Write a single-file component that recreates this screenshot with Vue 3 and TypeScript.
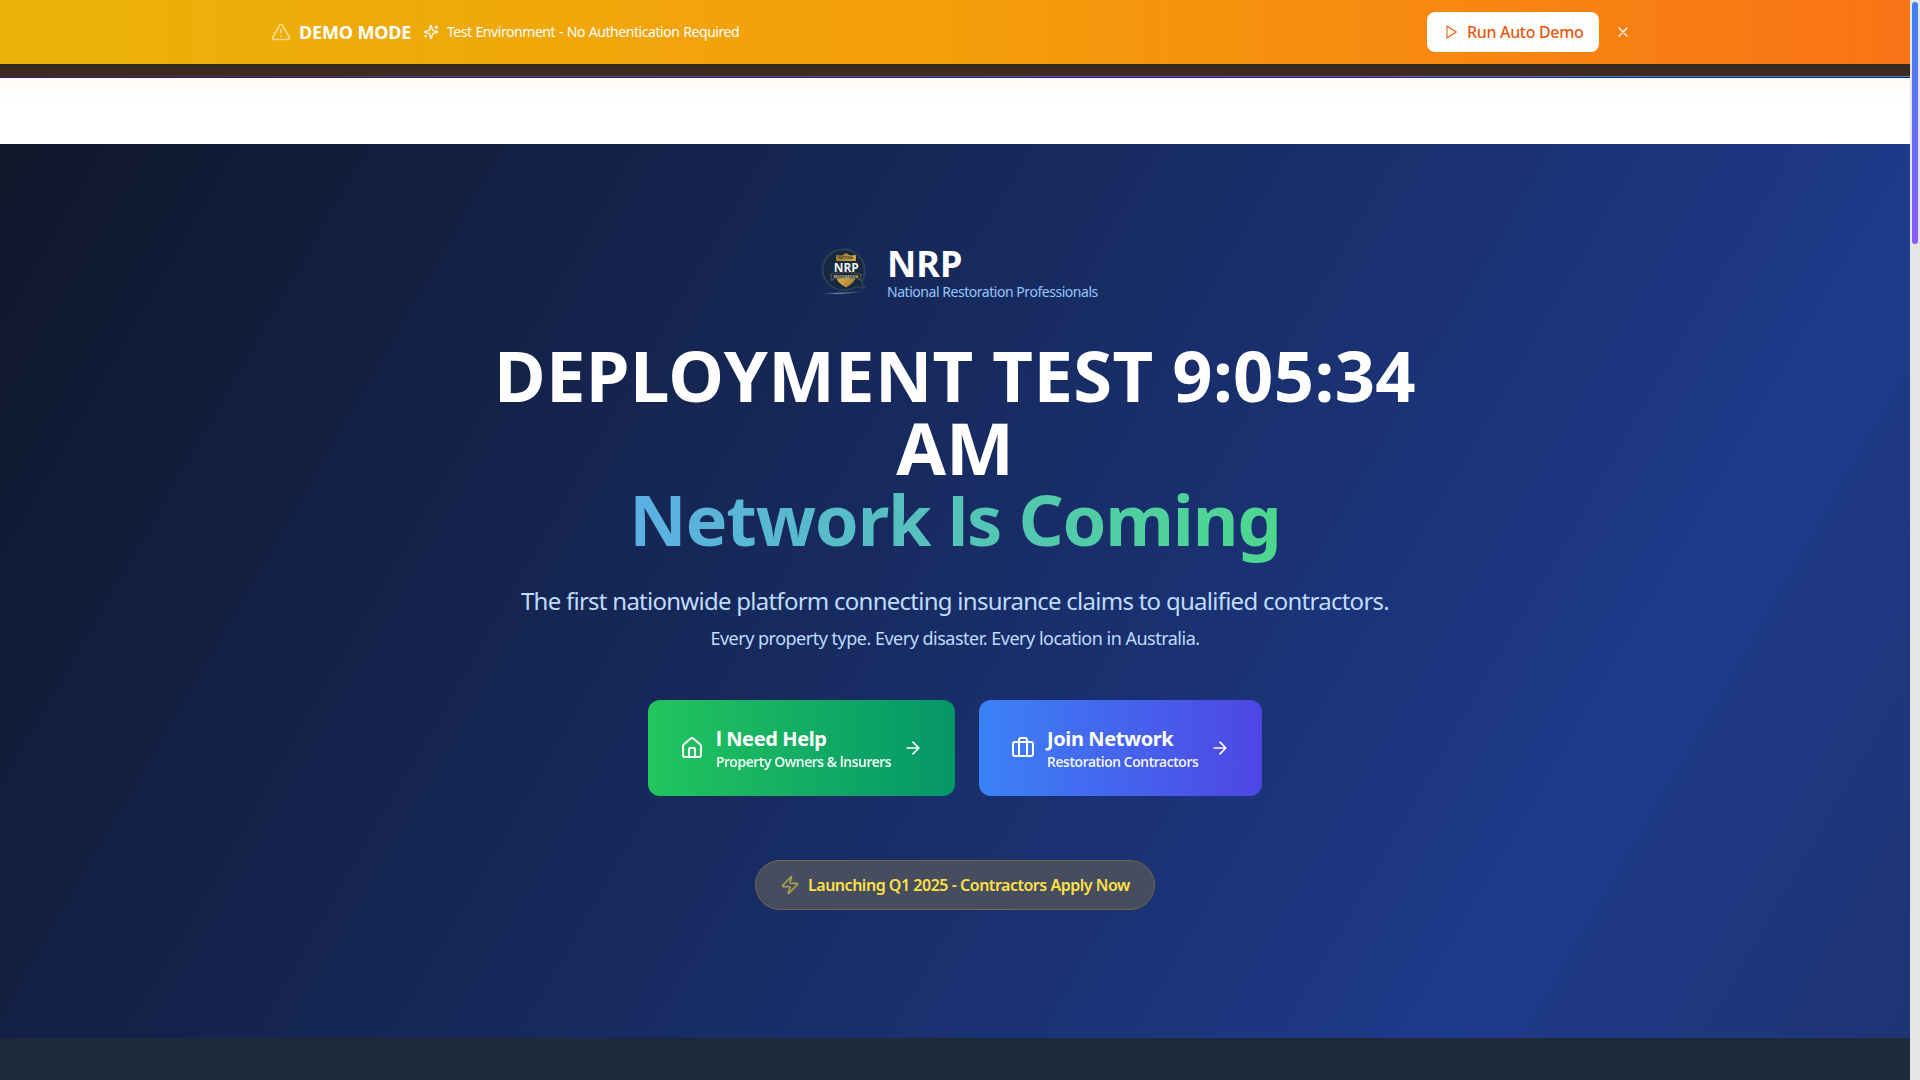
<script setup lang="ts">
const brand = 'NRP'
const year = 'Launching Q1 2025 - Contractors Apply Now'
</script>

<template>
  <div class="page">
    <main class="content">
      <div class="banner">
        <div class="banner-inner">
          <div class="banner-left">
            <svg class="warn" width="20" height="20" viewBox="0 0 24 24"><path d="m21.73 18-8-14a2 2 0 0 0-3.48 0l-8 14A2 2 0 0 0 4 21h16a2 2 0 0 0 1.73-3Z" /><path d="M12 9v4M12 17h.01" /></svg>
            <span class="demo">DEMO MODE</span>
            <svg class="sparkle" width="16" height="16" viewBox="0 0 24 24"><path d="M9.937 15.5A2 2 0 0 0 8.5 14.063l-6.135-1.582a.5.5 0 0 1 0-.962L8.5 9.936A2 2 0 0 0 9.937 8.5l1.582-6.135a.5.5 0 0 1 .963 0L14.063 8.5A2 2 0 0 0 15.5 9.937l6.135 1.581a.5.5 0 0 1 0 .964L15.5 14.063a2 2 0 0 0-1.437 1.437l-1.582 6.135a.5.5 0 0 1-.963 0z" /><path d="M20 3v4M22 5h-4M4 17v2M5 18H3" /></svg>
            <span class="env">Test Environment - No Authentication Required</span>
          </div>
          <div class="banner-right">
            <button class="run">
              <svg width="16" height="16" viewBox="0 0 24 24"><path d="M6 3l14 9-14 9z" /></svg>
              <span>Run Auto Demo</span>
            </button>
            <svg class="close" width="16" height="16" viewBox="0 0 24 24"><path d="M18 6 6 18M6 6l12 12" /></svg>
          </div>
        </div>
      </div>
      <div class="strip"><div class="glow"></div></div>
      <div class="gap"></div>
      <section class="hero">
        <div class="brand">
          <svg class="logo" width="48" height="48" viewBox="0 0 48 48">
            <defs>
              <linearGradient id="gold" x1="0" x2="1" y1="0" y2="1"><stop offset="0" stop-color="#8e6e2c" /><stop offset=".5" stop-color="#d2a544" /><stop offset="1" stop-color="#a07b2e" /></linearGradient>
              <linearGradient id="base"><stop offset="0" stop-color="#8fa3c8" stop-opacity="0" /><stop offset=".4" stop-color="#8fa3c8" stop-opacity=".5" /><stop offset="1" stop-color="#8fa3c8" stop-opacity="0" /></linearGradient>
            </defs>
            <path d="M1 45.500Q22 47 43 43.500 22 45 1 45.500Z" fill="url(#base)" stroke="url(#base)" stroke-width=".8" />
            <path d="M22.500 1.500C11 1.500 1.500 10.500 1.500 21.500S11 42 22.500 42c5 0 9.500-1.200 13-3.800 3 1.600 6 2 8.500 1.300-2.200-1.500-3.200-3.200-3.200-5.200 2-3.500 2.700-8 2.700-12.800C43.500 10 34 1.500 22.500 1.500Z" fill="#16283f" stroke="#294155" />
            <path d="M25 5 29 7.500l6-.5V28c0 5-5 8.500-10 11.500C20 36.500 15 33 15 28V7l6 .5z" fill="url(#gold)" />
            <path d="M15 13h20v12H15z" fill="#182b42" />
            <path d="m8 26 5-.5v7l-4 .5 1.500-3.500zM42 26l-5-.5v7l4 .5-1.500-3.500z" fill="#4a4a43" />
            <path d="M10.500 26c9-1.700 20-1.700 29 0v5c-9-1.500-20-1.500-29 0z" fill="#18212c" stroke="#777567" stroke-width=".5" />
            <text x="25.300" y="24" text-anchor="middle" textLength="25" lengthAdjust="spacingAndGlyphs" class="logo-name">{{ brand }}</text>
            <text x="25" y="29.800" text-anchor="middle" textLength="25" lengthAdjust="spacingAndGlyphs" class="logo-ribbon">RESTORATION</text>
            <text x="25" y="11" text-anchor="middle" textLength="15" lengthAdjust="spacingAndGlyphs" class="logo-top">NATIONAL</text>
          </svg>
          <div class="brand-text">
            <div class="name">{{ brand }}</div>
            <div class="full">National Restoration Professionals</div>
          </div>
        </div>
        <h1>
          <span class="l1">DEPLOYMENT TEST 9:05:34</span>
          <span class="l2">AM</span>
          <span class="l3">Network <i>I</i>s Coming</span>
        </h1>
        <p class="lead">The first nationwide platform connecting insurance claims to qualified contractors.</p>
        <p class="sub">Every property type. Every disaster. Every location in Australia.</p>
        <div class="actions">
          <button class="cta help">
            <svg class="ic" width="24" height="24" viewBox="0 0 24 24"><path d="M15 21v-8a1 1 0 0 0-1-1h-4a1 1 0 0 0-1 1v8" /><path d="M3 10a2 2 0 0 1 .709-1.528l7-5.999a2 2 0 0 1 2.582 0l7 5.999A2 2 0 0 1 21 10v9a2 2 0 0 1-2 2H5a2 2 0 0 1-2-2z" /></svg>
            <span class="label"><b><i>I</i> Need Help</b><small>Property Owners &amp; <i>I</i>nsurers</small></span>
            <svg class="arrow" width="20" height="20" viewBox="0 0 24 24"><path d="M5 12h14M12 5l7 7-7 7" /></svg>
          </button>
          <button class="cta join">
            <svg class="ic" width="24" height="24" viewBox="0 0 24 24"><path d="M16 20V4a2 2 0 0 0-2-2h-4a2 2 0 0 0-2 2v16" /><rect width="20" height="14" x="2" y="6" rx="2" /></svg>
            <span class="label"><b>Join Network</b><small>Restoration Contractors</small></span>
            <svg class="arrow" width="20" height="20" viewBox="0 0 24 24"><path d="M5 12h14M12 5l7 7-7 7" /></svg>
          </button>
        </div>
        <div class="pill">
          <svg width="20" height="20" viewBox="0 0 24 24"><path d="M4 14a1 1 0 0 1-.78-1.630l9.900-10.200a.5.5 0 0 1 .86.460l-1.920 6.020A1 1 0 0 0 13 10h7a1 1 0 0 1 .78 1.630l-9.900 10.200a.5.5 0 0 1-.86-.460l1.920-6.020A1 1 0 0 0 11 14z" /></svg>
          <span>{{ year }}</span>
        </div>
      </section>
      <div class="below"></div>
    </main>
    <div class="scrollbar"><div class="thumb"></div></div>
  </div>
</template>

<style>
html, body { margin: 0; overflow: hidden; }
</style>

<style scoped>
* { box-sizing: border-box; }
.page { display: flex; width: 1920px; height: 1080px; overflow: hidden; font-family: "Noto Sans", "Open Sans", sans-serif; color: #fff; background: #fff; }
.content { display: flex; flex-direction: column; width: 1910px; }
svg { display: block; flex: none; fill: none; stroke: currentColor; stroke-width: 2; stroke-linecap: round; stroke-linejoin: round; }
span, b, small, p, .full { white-space: nowrap; }
i { font-family: Roboto, sans-serif; font-style: normal; }
button { border: 0; font-family: inherit; color: inherit; padding: 0; }
.banner { height: 64px; flex: none; background: linear-gradient(90deg, #eab308, #f59e0b 50%, #f97316); }
.banner-inner { width: 1360px; height: 64px; margin-left: 271px; display: flex; align-items: center; justify-content: space-between; }
.banner-left { display: flex; align-items: center; }
.warn { opacity: .55; }
.demo { width: 113px; margin-left: 8px; font-size: 18px; font-weight: 700; letter-spacing: -.15px; }
.sparkle { margin-left: 11px; margin-right: 8px; }
.env { font-size: 14px; letter-spacing: -.43px; word-spacing: .5px; padding-bottom: 1px; }
.banner-right { display: flex; align-items: center; }
.run { width: 172px; height: 40px; border-radius: 8px; background: #fff; color: #ea580c; display: flex; align-items: center; padding-left: 16px; gap: 8px; font-size: 16px; font-weight: 500; letter-spacing: -.33px; }
.run svg { stroke-width: 1.6; }
.close { margin-left: 16px; }
.strip { height: 14px; flex: none; padding-top: 12px; background: linear-gradient(180deg, #31291f, #422b21 12px, #2d2540 13px); }
.glow { height: 1px; background: linear-gradient(90deg, #3f2550, #5145a8 30%, #6058e0 70%, #3b82f6 85%, #2f88e8); }
.gap { height: 66px; flex: none; background: linear-gradient(180deg, #fefaf6, #fff 22px); }
.hero { height: 894px; flex: none; display: flex; flex-direction: column; align-items: center; background: linear-gradient(120deg, #0f172a, #1e3a8a 81%, #1f3474); padding-top: 100px; }
.brand { display: flex; height: 64px; width: 268px; gap: 18px; }
.logo { margin-top: 4px; stroke: none; }
.logo-name { font: 700 13px "Open Sans", sans-serif; fill: #f0ede4; }
.logo-ribbon { font: 700 4px "Open Sans", sans-serif; fill: #c9c5b8; }
.logo-top { font: 700 3px "Open Sans", sans-serif; fill: #423a28; }
.name { height: 38px; line-height: 40px; font-size: 36px; font-weight: 700; }
.full { font-size: 14px; line-height: 20px; letter-spacing: -.46px; color: #93c5fd; }
h1 { margin: 31px 0 0; display: flex; flex-direction: column; align-items: center; font-size: 70.5px; line-height: 72px; font-weight: 700; }
h1 span { display: block; }
.l1 { letter-spacing: .37px; }
.l2 { font-size: 72px; }
.l3 { letter-spacing: -1.2px; padding-bottom: 5px; margin-bottom: -5px; background: linear-gradient(90deg, #60a5fa -25%, #4ade80 115%); background-clip: text; -webkit-background-clip: text; color: transparent; }
.lead { margin: 25px 0 0; font-size: 24px; line-height: 36px; letter-spacing: -.74px; color: #bfdbfe; }
.sub { margin: 5px 0 0; font-size: 18px; line-height: 28px; letter-spacing: -.5px; color: #bfdbfe; }
.actions { display: flex; gap: 24px; margin-top: 48px; }
.cta { height: 96px; border-radius: 12px; display: flex; align-items: center; padding: 0 32px; }
.help { width: 307px; background: linear-gradient(90deg, #22c55e, #059669); }
.join { width: 283px; background: linear-gradient(90deg, #3b82f6, #4f46e5); }
.label { flex: 1; min-width: 0; margin-left: 12px; padding-top: 2px; display: flex; flex-direction: column; align-items: flex-start; text-align: left; }
.label b { font-size: 20px; line-height: 26px; font-weight: 700; letter-spacing: -.4px; }
.label small { font-size: 14px; line-height: 20px; font-weight: 600; letter-spacing: -.54px; opacity: .9; }
.pill { width: 400px; height: 50px; margin-top: 64px; border-radius: 25px; border: 1px solid #726648; background: #454d5f; display: flex; align-items: center; padding-left: 24px; gap: 8px; color: #fde047; font-size: 16px; font-weight: 600; letter-spacing: -.48px; }
.pill svg { opacity: .55; }
.below { flex: 1; background: #1e293b; }
.scrollbar { width: 10px; background: #e5e5e5; padding: 2px; }
.thumb { width: 6px; height: 242px; border-radius: 3px; background: linear-gradient(180deg, #3b82f6, #8b5cf6); }
</style>
